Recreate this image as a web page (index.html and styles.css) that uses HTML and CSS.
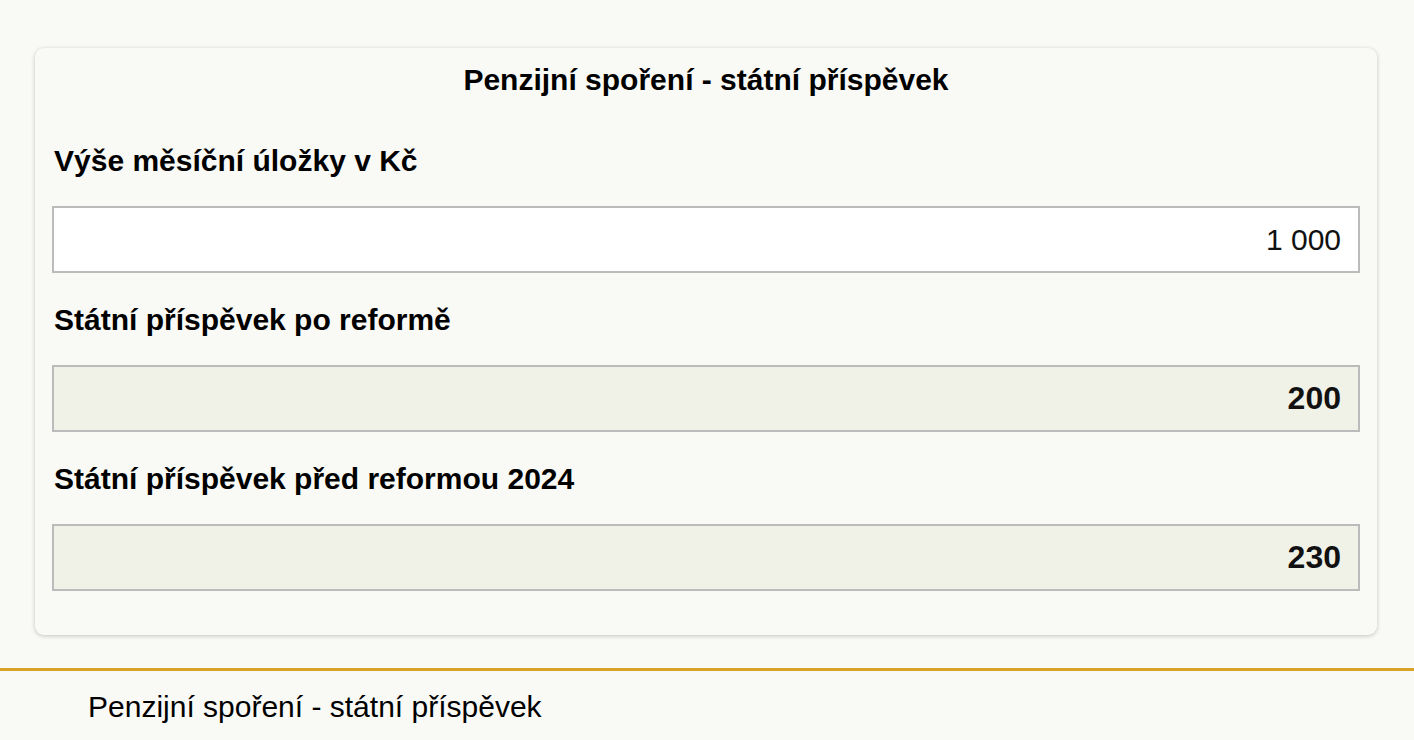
FILE: index.html
```html
<!DOCTYPE html>
<html lang="cs">
<head>
<meta charset="utf-8">
<title>Penzijní spoření - státní příspěvek</title>
<link rel="stylesheet" href="styles.css">
</head>
<body>
<main class="page">
  <section class="card">
    <h1 class="card-title">Penzijní spoření - státní příspěvek</h1>
    <div class="field">
      <label class="field-label" for="deposit">Výše měsíční úložky v Kč</label>
      <input class="field-input" id="deposit" type="text" value="1 000">
    </div>
    <div class="field">
      <label class="field-label" for="after">Státní příspěvek po reformě</label>
      <input class="field-input field-input--readonly" id="after" type="text" value="200" readonly>
    </div>
    <div class="field">
      <label class="field-label" for="before">Státní příspěvek před reformou 2024</label>
      <input class="field-input field-input--readonly" id="before" type="text" value="230" readonly>
    </div>
  </section>
</main>
<footer class="footer">
  <span class="footer-text">Penzijní spoření - státní příspěvek</span>
</footer>
</body>
</html>
```

FILE: styles.css
```css
html, body {
  margin: 0;
  padding: 0;
  background: #f9f9f5;
  font-family: "Liberation Sans", Arial, sans-serif;
  color: #000;
}

.page {
  padding: 48px 37px 33px 35px;
}

.card {
  border-radius: 9px;
  background: #f9f9f5;
  box-shadow: 0 1px 4px rgba(0, 0, 0, 0.22);
  padding: 17px 17px 44px 17px;
}

.card-title {
  margin: 0 0 19px 0;
  font-size: 30px;
  line-height: 30px;
  font-weight: bold;
  text-align: center;
}

.field {
  display: flex;
  flex-direction: column;
}

.field-label {
  display: block;
  margin: 32px 0 30px 2px;
  font-size: 30px;
  line-height: 30px;
  font-weight: bold;
}

.field-input {
  box-sizing: border-box;
  width: 100%;
  height: 67px;
  margin: 0;
  border: 2px solid #bbbbbb;
  border-radius: 0;
  background: #ffffff;
  padding: 0 17px;
  font-family: "Liberation Sans", Arial, sans-serif;
  font-size: 30px;
  color: #111;
  text-align: right;
  outline: none;
}

.field-input--readonly {
  background: #f1f2e7;
  font-weight: bold;
  font-size: 32px;
}

.footer {
  border-top: 3px solid #d9a425;
  padding: 21px 0 18px 88px;
}

.footer-text {
  font-size: 30px;
  line-height: 30px;
}
```
